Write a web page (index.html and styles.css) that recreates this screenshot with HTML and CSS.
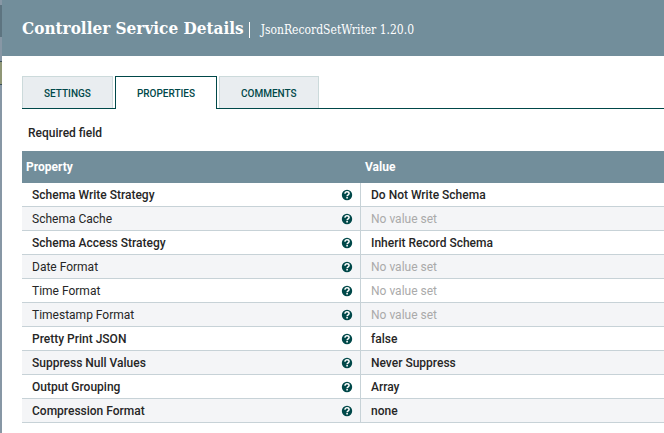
FILE: index.html
```html
<!DOCTYPE html>
<html lang="en">
<head>
<meta charset="utf-8">
<title>Controller Service Details</title>
<link rel="stylesheet" href="styles.css">
</head>
<body>
<svg class="symbols" aria-hidden="true">
  <symbol id="help" viewBox="0 0 12 12">
    <circle cx="6" cy="6" r="5.2" fill="#004849"/>
    <path d="M4 4.7C4 3.4 4.9 2.8 6 2.8s2.1.6 2.1 1.7C8.1 5.8 6.1 5.8 6.1 7.2" fill="none" stroke="#fff" stroke-width="1.5"/>
    <rect x="5.3" y="8" width="1.6" height="1.5" fill="#fff"/>
  </symbol>
</svg>
<main class="dialog">
  <header class="dialog-header">
    <h1>Controller Service Details</h1>
    <p class="subtitle">JsonRecordSetWriter 1.20.0</p>
  </header>
  <div class="dialog-content">
    <nav class="tabs" role="tablist">
      <button class="tab" type="button" role="tab" aria-selected="false">SETTINGS</button>
      <button class="tab selected" type="button" role="tab" aria-selected="true">PROPERTIES</button>
      <button class="tab" type="button" role="tab" aria-selected="false">COMMENTS</button>
    </nav>
    <p class="required-note">Required field</p>
    <table class="properties">
      <thead>
        <tr><th class="name-column" scope="col">Property</th><th scope="col">Value</th></tr>
      </thead>
      <tbody>
        <tr class="required"><td><div class="name">Schema Write Strategy<svg class="help"><use href="#help"/></svg></div></td><td>Do Not Write Schema</td></tr>
        <tr><td><div class="name">Schema Cache<svg class="help"><use href="#help"/></svg></div></td><td class="unset">No value set</td></tr>
        <tr class="required"><td><div class="name">Schema Access Strategy<svg class="help"><use href="#help"/></svg></div></td><td>Inherit Record Schema</td></tr>
        <tr><td><div class="name">Date Format<svg class="help"><use href="#help"/></svg></div></td><td class="unset">No value set</td></tr>
        <tr><td><div class="name">Time Format<svg class="help"><use href="#help"/></svg></div></td><td class="unset">No value set</td></tr>
        <tr><td><div class="name">Timestamp Format<svg class="help"><use href="#help"/></svg></div></td><td class="unset">No value set</td></tr>
        <tr class="required"><td><div class="name">Pretty Print JSON<svg class="help"><use href="#help"/></svg></div></td><td>false</td></tr>
        <tr class="required"><td><div class="name">Suppress Null Values<svg class="help"><use href="#help"/></svg></div></td><td>Never Suppress</td></tr>
        <tr class="required"><td><div class="name">Output Grouping<svg class="help"><use href="#help"/></svg></div></td><td>Array</td></tr>
        <tr class="required"><td><div class="name">Compression Format<svg class="help"><use href="#help"/></svg></div></td><td>none</td></tr>
      </tbody>
    </table>
  </div>
</main>
</body>
</html>
```

FILE: styles.css
```css
* {
  box-sizing: border-box;
}

body {
  margin: 0;
  background: linear-gradient(#8797a5 5px, #5d7480 5px 37px, #8797a5 37px 61px, #3c5058 61px 62px, #8f9676 62px 84px, #3c5058 84px 85px, #8797a5 85px);
  color: #262626;
  font: 12px/16px Roboto, sans-serif;
}

.symbols {
  display: none;
}

.dialog {
  min-height: 100vh;
  margin-left: 2px;
  background: #fff;
}

.dialog-header {
  display: flex;
  align-items: center;
  height: 56px;
  padding: 0 20px;
  background: #728e9b;
  color: #fff;
  font-family: "Roboto Slab", "DejaVu Serif Condensed", "DejaVu Serif", serif;
  white-space: nowrap;
}

h1 {
  margin: 0;
  font-size: 17px;
  line-height: 24px;
}

.subtitle {
  margin: 4px 0 0 5px;
  padding-left: 11px;
  border-left: 1px solid #fff;
  font-size: 12px;
  line-height: 16px;
}

.dialog-content {
  padding: 20px 0 0 20px;
}

.tabs {
  display: flex;
  gap: 2px;
  height: 33px;
  border-bottom: 1px solid #004849;
}

.tab {
  height: 32px;
  padding: 2px 21px 0;
  border: 1px solid #ccdadb;
  border-bottom: 0;
  background: #e9edf0;
  color: #004849;
  font: 500 10px/16px Roboto, sans-serif;
}

.tab.selected {
  height: 33px;
  border-color: #004849;
  background: #fff;
}

.required-note {
  margin: 16px 0 10px 6px;
  font-weight: 500;
}

.properties {
  width: 100%;
  border-collapse: separate;
  border-spacing: 0;
  table-layout: fixed;
}

.name-column {
  width: 339px;
}

th {
  height: 32px;
  padding: 0 4px;
  background: #728e9b;
  color: #fff;
  font-weight: 700;
  text-align: left;
}

td {
  height: 24px;
  padding: 0 10px;
  border-bottom: 1px solid #c7d2d7;
}

td:first-child {
  border-right: 1px solid #c7d2d7;
}

tbody tr:nth-child(even) {
  background: #f4f5f7;
}

.required {
  font-weight: 500;
}

.unset {
  color: #aaa;
}

.name {
  display: flex;
  align-items: center;
  justify-content: space-between;
}

.help {
  width: 12px;
  height: 12px;
  margin-right: -3px;
}
```
